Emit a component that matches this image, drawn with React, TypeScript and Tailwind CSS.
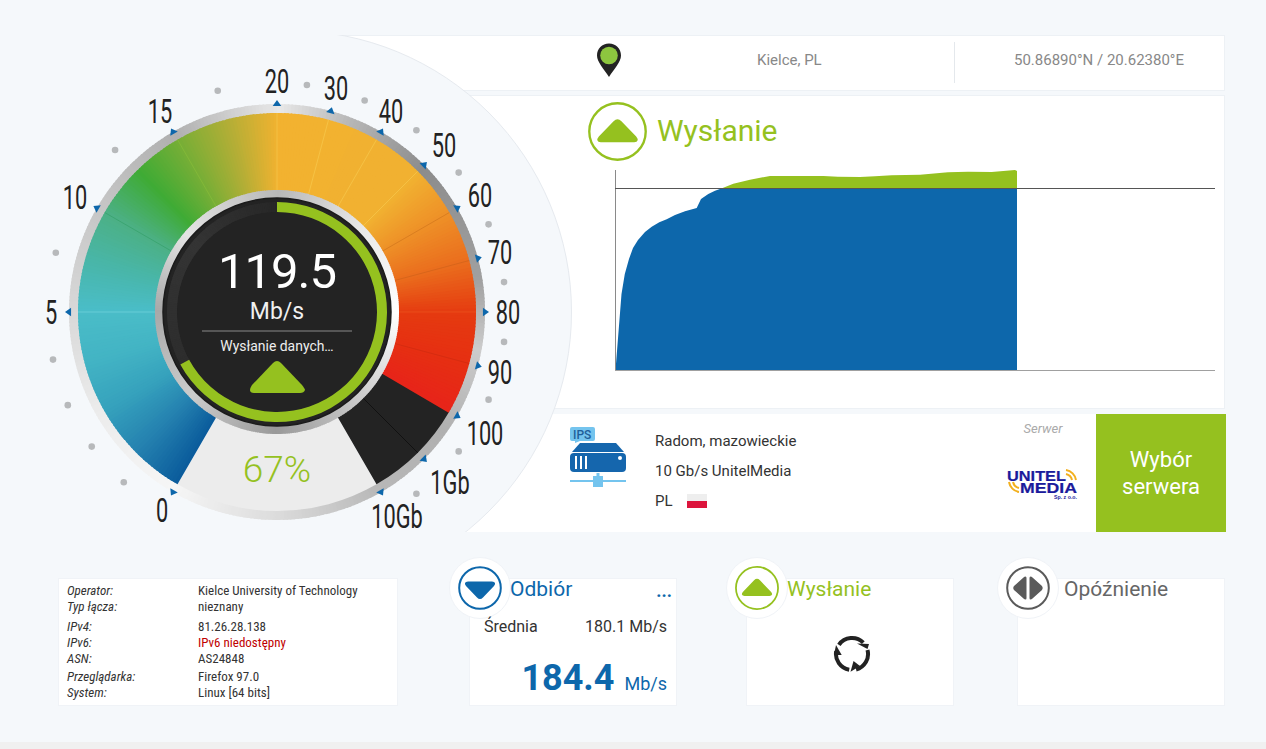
import type { ReactNode } from "react";

const GREEN = "#95c11f";
const BLUE = "#0d67ab";
const CX = 277;
const CY = 312;

const polar = (r: number, deg: number): [number, number] => {
  const a = ((deg - 90) * Math.PI) / 180;
  return [CX + r * Math.cos(a), CY + r * Math.sin(a)];
};

const sector = (r1: number, r2: number, a1: number, a2: number) => {
  const [x1, y1] = polar(r2, a1);
  const [x2, y2] = polar(r2, a2);
  const [x3, y3] = polar(r1, a2);
  const [x4, y4] = polar(r1, a1);
  const big = a2 - a1 > 180 ? 1 : 0;
  return `M${x1} ${y1}A${r2} ${r2} 0 ${big} 1 ${x2} ${y2}L${x3} ${y3}A${r1} ${r1} 0 ${big} 0 ${x4} ${y4}Z`;
};

type Stop = [number, string];

const mix = (stops: Stop[], a: number) => {
  let i = 0;
  while (i < stops.length - 2 && a > stops[i + 1][0]) i++;
  const [a1, c1] = stops[i];
  const [a2, c2] = stops[i + 1];
  const t = Math.min(1, Math.max(0, (a - a1) / (a2 - a1)));
  const ch = (c: string, n: number) => parseInt(c.slice(1 + n * 2, 3 + n * 2), 16);
  const v = [0, 1, 2].map((n) => Math.round(ch(c1, n) + (ch(c2, n) - ch(c1, n)) * t));
  return `rgb(${v[0]},${v[1]},${v[2]})`;
};

const faceStops: Stop[] = [
  [-150, "#0b5c9c"],
  [-135, "#2582b0"],
  [-120, "#36a2bd"],
  [-105, "#43b4c4"],
  [-90, "#4abdc8"],
  [-75, "#49b6a8"],
  [-60, "#4cb084"],
  [-45, "#3fab35"],
  [-30, "#78ae36"],
  [-15, "#b3ae36"],
  [0, "#f2b230"],
  [45, "#f1b131"],
  [60, "#ee8f27"],
  [75, "#ea6c1d"],
  [90, "#e53a10"],
  [105, "#e62f12"],
  [120, "#e7241a"],
];

const rimStops: Stop[] = [
  [-180, "#dcdcdc"],
  [-150, "#f6f6f6"],
  [-120, "#ececec"],
  [-90, "#d8d8d8"],
  [-60, "#c6c6c6"],
  [-30, "#b0b0b0"],
  [0, "#e8e8e8"],
  [20, "#b8b8b8"],
  [45, "#8c8c8c"],
  [80, "#a0a0a0"],
  [100, "#cccccc"],
  [125, "#b0b0b0"],
  [150, "#b8b8b8"],
  [180, "#dcdcdc"],
];

const hubStops: Stop[] = [
  [-180, "#999999"],
  [-135, "#cccccc"],
  [-90, "#a8a8a8"],
  [-50, "#e4e4e4"],
  [0, "#b8b8b8"],
  [45, "#e8e8e8"],
  [90, "#ffffff"],
  [135, "#cccccc"],
  [180, "#999999"],
];

const trackStops: Stop[] = [
  [-180, "#272727"],
  [-50, "#343434"],
  [0, "#272727"],
  [180, "#272727"],
];

const degrees = (from: number, to: number) =>
  Array.from({ length: to - from }, (_, i) => from + i);

const labels: [string, number, number][] = [
  ["0", 162, 510],
  ["5", 51, 312],
  ["10", 75, 197],
  ["15", 160, 111],
  ["20", 277, 81],
  ["30", 336, 88],
  ["40", 391, 111],
  ["50", 444, 145],
  ["60", 480, 195],
  ["70", 500, 252],
  ["80", 508, 312],
  ["90", 500, 372],
  ["100", 485, 433],
  ["1Gb", 450, 482],
  ["10Gb", 397, 516],
];

const majorTicks = [-150, -90, -60, -30, 0, 15, 30, 45, 60, 75, 90, 105, 120, 135, 150];
const dots = [-138, -126, -114, -102, -75, -45, -15, 7.5, 22.5, 37.5, 52.5, 67.5, 82.5, 97.5, 112.5, 127.5, 142.5];

const separators: [number, string][] = [
  [-90, "#7fdde2"],
  [-60, "#2f9c63"],
  [-30, "#8cc03a"],
  [0, "#f7cf55"],
  [15, "#f7cf55"],
  [30, "#f7cf55"],
  [45, "#f7cf55"],
  [60, "#c96f1a"],
  [75, "#c9601a"],
  [90, "#ee5a22"],
  [105, "#c92a10"],
];

function Gauge() {
  return (
    <svg width="560" height="560" viewBox="0 0 560 560" className="absolute left-0 top-[40px]">
      <g transform="translate(0 -40)">
        {degrees(-180, 180).map((a) => (
          <path key={a} d={sector(198, 208, a, a + 1.4)} fill={mix(rimStops, a)} />
        ))}
        <path d={sector(120, 199, 150, 210)} fill="#ececec" />
        <path d={sector(120, 199, 120, 150)} fill="#232323" />
        {degrees(-150, 120).map((a) => (
          <path key={a} d={sector(120, 199, a, a + 1.4)} fill={mix(faceStops, a)} />
        ))}
        {separators.map(([a, c]) => {
          const [x1, y1] = polar(120, a);
          const [x2, y2] = polar(199, a);
          return <line key={a} x1={x1} y1={y1} x2={x2} y2={y2} stroke={c} strokeWidth="0.8" strokeOpacity="0.7" />;
        })}
        <line x1={polar(120, 135)[0]} y1={polar(120, 135)[1]} x2={polar(199, 135)[0]} y2={polar(199, 135)[1]} stroke="#111111" strokeWidth="1" />

        {degrees(-180, 180).map((a) => (
          <path key={a} d={sector(113, 122, a, a + 1.4)} fill={mix(hubStops, a)} />
        ))}
        <circle cx={CX} cy={CY} r="114" fill="#232323" />
        <circle cx={CX} cy={CY} r="114" fill="none" stroke="#1b1b1b" strokeWidth="1.5" />
        {degrees(-180, 180).map((a) => (
          <path key={a} d={sector(100, 110, a, a + 1.4)} fill={mix(trackStops, a)} />
        ))}
        <path d={sector(100, 110, 0, 241.5)} fill={GREEN} />

        {majorTicks.map((a) => {
          const [x1, y1] = polar(206, a - 1.2);
          const [x2, y2] = polar(206, a + 1.2);
          const [x3, y3] = polar(212, a);
          return <polygon key={a} points={`${x1},${y1} ${x2},${y2} ${x3},${y3}`} fill={BLUE} />;
        })}
        {dots.map((a) => {
          const [x, y] = polar(229, a);
          return <circle key={a} cx={x} cy={y} r="3.3" fill="#b7b9bb" />;
        })}

        {labels.map(([t, x, y]) => (
          <text
            key={t}
            transform={`translate(${x} ${y + 12}) scale(0.64 1)`}
            textAnchor="middle"
            fontSize="34"
            fill="#222222"
            fontFamily="Roboto, sans-serif"
          >
            {t}
          </text>
        ))}

        <text x={CX} y="288" textAnchor="middle" fontSize="49" letterSpacing="-1" fill="#ffffff" fontFamily="Roboto, sans-serif">
          119.5
        </text>
        <text x={CX} y="319" textAnchor="middle" fontSize="23" fill="#f0f0f0" fontFamily="Roboto, sans-serif">
          Mb/s
        </text>
        <line x1="202" y1="331" x2="352" y2="331" stroke="#8a8a8a" strokeWidth="1" />
        <text transform="translate(277 351) scale(0.93 1)" textAnchor="middle" fontSize="15" fill="#eeeeee" fontFamily="Roboto, sans-serif">
          Wysłanie danych…
        </text>
        <path d="M277 361Q279 361 281 363L302 385Q305 389 305 390Q304 393 300 393L254 393Q250 393 250 390Q250 388 252 385L273 363Q275 361 277 361Z" fill={GREEN} />
        <text x={CX} y="482" textAnchor="middle" fontSize="37" fontWeight="300" fill={GREEN} fontFamily="Roboto, sans-serif">
          67%
        </text>
      </g>
    </svg>
  );
}

function UpIcon({ size }: { size: number }) {
  return (
    <svg width={size} height={size} viewBox="0 0 60 60" className="block">
      <circle cx="30" cy="30" r="28.7" fill="#ffffff" stroke={GREEN} strokeWidth="2.4" />
      <path d="M30 17.5Q32 17.5 34 19.5L49 35Q51 37.5 50.5 39Q50 41 47 41L13 41Q10 41 9.5 39Q9 37.5 11 35L26 19.5Q28 17.5 30 17.5Z" fill={GREEN} />
    </svg>
  );
}

function DownIcon() {
  return (
    <svg width="44" height="44" viewBox="0 0 44 44" className="block">
      <circle cx="22" cy="22" r="20.8" fill="#ffffff" stroke={BLUE} strokeWidth="2" />
      <path d="M22 33Q20.5 33 19 31.5L8 20Q6.5 18.2 7 17Q7.5 15.5 10 15.5L34 15.5Q36.5 15.5 37 17Q37.5 18.2 36 20L25 31.5Q23.5 33 22 33Z" fill={BLUE} />
    </svg>
  );
}

function PingIcon() {
  return (
    <svg width="44" height="44" viewBox="0 0 44 44" className="block">
      <circle cx="22" cy="22" r="20.8" fill="#ffffff" stroke="#5a5a5a" strokeWidth="2" />
      <path d="M19.5 10.5Q20.5 10.5 20.5 12L20.5 32Q20.5 33.5 19.5 33.5Q18.5 33.5 17.5 32.5L8 24Q6.5 22 8 20L17.5 11.5Q18.5 10.5 19.5 10.5Z" fill="#5a5a5a" />
      <path d="M24.5 10.5Q23.5 10.5 23.5 12L23.5 32Q23.5 33.5 24.5 33.5Q25.5 33.5 26.5 32.5L36 24Q37.5 22 36 20L26.5 11.5Q25.5 10.5 24.5 10.5Z" fill="#5a5a5a" />
    </svg>
  );
}

function SpinnerIcon() {
  return (
    <svg width="38" height="38" viewBox="0 0 38 38" className="block">
      <g fill="none" stroke="#222222" strokeWidth="4">
        <path d="M5.9 9.8A16 16 0 0 1 30.3 7.7" />
        <path d="M34.5 14.9A16 16 0 0 1 23.1 34.5" />
        <path d="M16.2 34.8A16 16 0 0 1 3.2 16.2" />
      </g>
      <g fill="#222222">
        <polygon points="24,8.5 36,9 34.5,14" />
        <polygon points="17.5,36.8 20.5,26 27,31" />
        <polygon points="3,10 1,20 8.7,20" />
      </g>
    </svg>
  );
}

function PinIcon() {
  return (
    <svg width="26" height="36" viewBox="0 0 26 36" className="block">
      <path d="M13 0.5C6 0.5 1 5.7 1 12.5C1 19 8 26 13 34C18 26 25 19 25 12.5C25 5.7 20 0.5 13 0.5Z" fill="#232323" />
      <circle cx="13" cy="12.5" r="8.8" fill="#8dc63f" />
    </svg>
  );
}

function ServerIcon() {
  return (
    <svg width="56" height="60" viewBox="0 0 56 60" className="block">
      <path d="M2 0H23Q25 0 25 2V12Q25 14 23 14H10L5 16V14H2Q0 14 0 12V2Q0 0 2 0Z" fill="#74c4ee" />
      <text x="3" y="11.5" fontSize="12" fontWeight="500" fill="#1f5f9a" fontFamily="Roboto, sans-serif">
        IPS
      </text>
      <path d="M10 16H46L54 25H2Z" fill="#1566ad" />
      <path d="M4 26H52Q56 26 56 30V41Q56 45 52 45H4Q0 45 0 41V30Q0 26 4 26Z" fill="#1566ad" />
      <g fill="#ffffff">
        <rect x="5" y="29" width="2" height="13" />
        <rect x="10" y="29" width="2" height="13" />
        <rect x="15" y="29" width="2" height="13" />
        <circle cx="50" cy="31" r="2" />
      </g>
      <g fill="#74c4ee">
        <rect x="0" y="53" width="23" height="2" />
        <rect x="33" y="53" width="23" height="2" />
        <path d="M26.5 46H29.5V49H33V60H23V49H26.5Z" />
      </g>
    </svg>
  );
}

function UnitelLogo() {
  const arcs = "M0 0A12 12 0 0 1 10 10M0 4A8 8 0 0 1 6 10";
  return (
    <svg width="72" height="32" viewBox="0 0 72 32" className="block">
      <g fill="none" stroke="#f2b01e" strokeWidth="2">
        <path d={arcs} transform="translate(59 2)" />
        <path d={arcs} transform="translate(12 24) rotate(180)" />
      </g>
      <g fontFamily="Liberation Sans, sans-serif" fontWeight="700" fill="#1b1b9c">
        <text x="0" y="13" fontSize="15" textLength="59" lengthAdjust="spacingAndGlyphs" stroke="#1b1b9c" strokeWidth="0.2">
          UNITEL
        </text>
        <text x="13" y="25" fontSize="15" textLength="57" lengthAdjust="spacingAndGlyphs" stroke="#1b1b9c" strokeWidth="0.2">
          MEDIA
        </text>
        <text x="47" y="31" fontSize="6" textLength="23" lengthAdjust="spacingAndGlyphs">
          Sp. z o.o.
        </text>
      </g>
    </svg>
  );
}

function UploadChart() {
  const blue =
    "M0.5 200L6.5 124L9.8 104L14 89L18 78L23 70L30 62L36.7 56.7L44.3 52.3L51.7 49.3L60 45L70 41.3L81.7 38L86 29L93.3 24L100 20.7L107 18.3L402 18.3V200Z";
  const green =
    "M107 18.3L118.3 13.7L135 9.7L155 6L208.3 6L223 6.7L245 7L260 6.3L276.7 5.3L305 4.7L333 2.3L353 1.7L376.7 2L400 0L402 1V18.3Z";
  return (
    <svg width="600" height="201" viewBox="0 0 600 201" className="block">
      <path d={blue} fill={BLUE} />
      <path d={green} fill={GREEN} />
      <line x1="0.5" y1="0" x2="0.5" y2="200" stroke="#8a8a8a" />
      <line x1="0" y1="18.5" x2="600" y2="18.5" stroke="#555555" />
      <line x1="0" y1="200.5" x2="600" y2="200.5" stroke="#a0a0a0" />
    </svg>
  );
}

function ResultCard({ icon, children }: { icon: ReactNode; children: ReactNode }) {
  return (
    <div className="relative h-[128px] w-[208px] border border-[#f0f3f7] bg-white">
      <div className="absolute left-[-21px] top-[-22px] flex h-[62px] w-[62px] items-center justify-center rounded-full border border-[#f0f3f7] bg-white">
        {icon}
      </div>
      {children}
    </div>
  );
}

const infoGroups: [string, string, string?][][] = [
  [
    ["Operator:", "Kielce University of Technology"],
    ["Typ łącza:", "nieznany"],
  ],
  [
    ["IPv4:", "81.26.28.138"],
    ["IPv6:", "IPv6 niedostępny", "text-[#c00000]"],
    ["ASN:", "AS24848"],
  ],
  [
    ["Przeglądarka:", "Firefox 97.0"],
    ["System:", "Linux [64 bits]"],
  ],
];

export default function App() {
  return (
    <div className="relative h-screen overflow-hidden bg-[#f5f8fb] pt-[35px] font-['Roboto',sans-serif] text-[#333333]">
      <div className="relative ml-[333px] w-[893px] overflow-hidden">
        <div className="mr-px flex h-[56px] items-center border border-[#edf1f5] bg-white text-[15px] text-[#888888]">
          <div className="mb-[4px] ml-[262px]">
            <PinIcon />
          </div>
          <div className="mb-[6px] ml-[135px] w-[64px] whitespace-nowrap text-center">Kielce, PL</div>
          <div className="mb-px ml-[133px] h-[41px] w-px bg-[#e4e8ec]" />
          <div className="mb-[6px] ml-[59px] whitespace-nowrap">50.86890°N / 20.62380°E</div>
        </div>

        <div className="mr-px mt-[4px] h-[314px] border border-[#edf1f5] bg-white pl-[254px]">
          <div className="flex items-center gap-[10px] pt-[6px]">
            <UpIcon size={59} />
            <span className="mb-[2px] text-[30px] leading-none text-[#95c11f]">Wysłanie</span>
          </div>
          <div className="ml-[27px] mt-[9px]">
            <UploadChart />
          </div>
        </div>

        <div className="mt-[5px] flex h-[118px] bg-white">
          <div className="ml-[237px] mt-[13px]">
            <ServerIcon />
          </div>
          <div className="ml-[29px] flex flex-col gap-[10px] pt-[17px] text-[15px] leading-5">
            <div>Radom, mazowieckie</div>
            <div>10 Gb/s UnitelMedia</div>
            <div className="flex items-center">
              PL
              <span className="ml-[14px] block h-[14px] w-[20px]">
                <span className="block h-[7px] bg-[#eeeeee]" />
                <span className="block h-[7px] bg-[#dc143c]" />
              </span>
            </div>
          </div>
          <div className="ml-auto flex w-[100px] flex-col items-center">
            <div className="ml-[-6px] mt-[7px] text-[13px] italic leading-4 text-[#aaaaaa]">Serwer</div>
            <div className="ml-[-6px] mt-[31px]">
              <UnitelLogo />
            </div>
          </div>
          <div className="flex w-[130px] items-center justify-center bg-[#95c11f] text-center text-[22px] leading-[27px] text-white">
            Wybór
            <br />
            serwera
          </div>
        </div>

        <div className="absolute left-[-325px] top-[-5px] h-[564px] w-[564px] rounded-full border border-[#e6eaef] bg-[#f5f8fb]" />
      </div>

      <Gauge />

      <div className="relative mt-[46px] flex pl-[58px]">
        <div className="h-[128px] w-[340px] border border-[#f0f3f7] bg-white pl-[8px] pt-[4px] text-[13px] leading-[16px] [font-stretch:condensed]">
          {infoGroups.map((group, i) => (
            <div key={i} className={i === 1 ? "mt-[4px]" : i === 2 ? "mt-[2px]" : ""}>
              {group.map(([name, value, color]) => (
                <div key={name} className="flex">
                  <div className="w-[131px] italic">{name}</div>
                  <div className={color}>{value}</div>
                </div>
              ))}
            </div>
          ))}
        </div>

        <div className="ml-[71px]">
          <ResultCard icon={<DownIcon />}>
            <div className="relative h-full pl-[40px]">
              <div className="text-[21px] leading-[20px] text-[#0d67ab]">Odbiór</div>
              <div className="absolute right-[4px] top-[3px] text-[18px] font-bold leading-none text-[#0d67ab]">...</div>
              <div className="absolute left-[14px] right-[9px] top-[38px] flex justify-between text-base leading-5">
                <span>Średnia</span>
                <span>180.1 Mb/s</span>
              </div>
              <div className="absolute bottom-[5px] right-[9px] flex items-baseline gap-[10px] text-[#0d67ab]">
                <span className="text-[36px] font-bold leading-[44px]">184.4</span>
                <span className="text-lg">Mb/s</span>
              </div>
            </div>
          </ResultCard>
        </div>

        <div className="ml-[69px]">
          <ResultCard icon={<UpIcon size={44} />}>
            <div className="pl-[40px] text-[21px] leading-[20px] text-[#95c11f]">Wysłanie</div>
            <div className="ml-[4px] mt-[36px] flex justify-center">
              <SpinnerIcon />
            </div>
          </ResultCard>
        </div>

        <div className="ml-[63px]">
          <ResultCard icon={<PingIcon />}>
            <div className="pl-[46px] text-[21px] leading-[20px] text-[#666666]">Opóźnienie</div>
          </ResultCard>
        </div>
      </div>

      <div className="absolute inset-x-0 bottom-0 h-[7px] bg-[#f0f0f0]" />
    </div>
  );
}
